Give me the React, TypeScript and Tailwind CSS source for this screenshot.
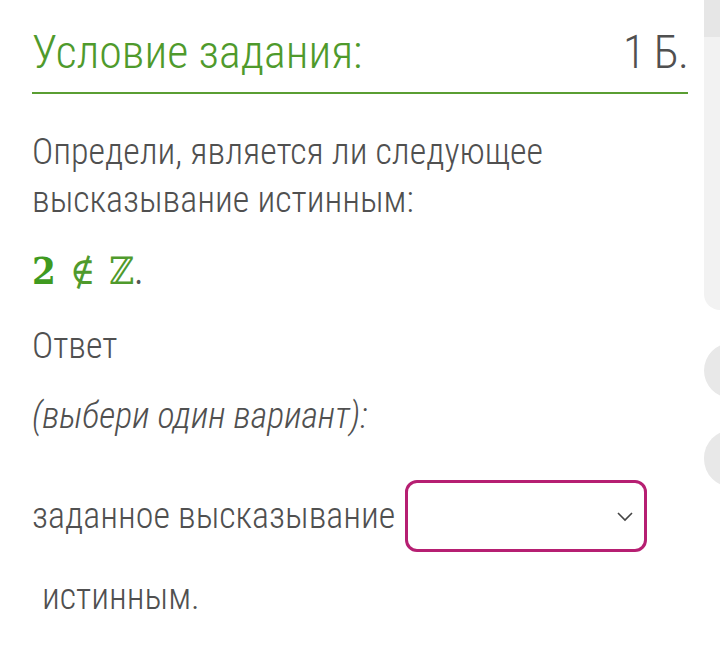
import React from "react";

export default function App() {
  const font = { fontFamily: "Roboto, 'Noto Sans', sans-serif" };
  return (
    <div className="w-[720px] h-[652px] bg-white flex overflow-hidden" style={font}>
      <div className="w-[704px] pl-[32px] pr-[16px] flex flex-col font-light font-stretch-condensed text-[#505050]">
        <div className="flex justify-between items-end h-[76px] pb-[1px]">
          <span className="text-[46px] leading-none text-[#4f9a2c]">Условие задания:</span>
          <span className="text-[46px] leading-none text-[#505050] tracking-[-1px]">1 Б.</span>
        </div>
        <div className="h-[2px] bg-[#5a9e32] mt-[16px]"></div>
        <p className="mt-[34px] text-[36px] leading-[48px]">
          Определи, является ли следующее
          <br />
          высказывание истинным:
        </p>
        <div className="mt-[28px] text-[38px] leading-none flex items-baseline" style={{ fontFamily: "'DejaVu Serif', 'Liberation Serif', serif" }}>
          <span className="font-bold text-[#3f9a1f]">2</span>
          <span className="ml-[14px] text-[#4f9a2c] font-extralight">∉</span>
          <span className="ml-[14px] text-[#4f9a2c] font-normal">ℤ</span>
          <span className="text-[#555] font-normal text-[32px]">.</span>
        </div>
        <p className="mt-[38px] text-[36px] leading-none">Ответ</p>
        <p className="mt-[34px] text-[36px] leading-none italic">(выбери один вариант):</p>
        <div className="mt-[46px] flex items-center">
          <span className="text-[36px] leading-none">заданное высказывание</span>
          <div className="ml-[10px] w-[242px] h-[72px] border-[3px] border-[#b61f72] rounded-[12px] flex items-center justify-end pr-[10px]">
            <svg width="18" height="12" viewBox="0 0 18 12" fill="none" stroke="#444" strokeWidth="1.6">
              <path d="M2 3 L9 10 L16 3" />
            </svg>
          </div>
        </div>
        <p className="mt-[27px] pl-[10px] text-[36px] leading-none">истинным.</p>
      </div>
      <div className="w-[16px] flex flex-col overflow-hidden">
        <div className="h-[37px] bg-[#e6e6e6] shrink-0"></div>
        <div className="h-[273px] bg-[#f2f2f2] rounded-bl-[26px] shrink-0"></div>
        <div className="mt-[33px] w-[56px] h-[55px] rounded-full bg-[#e8e8e8] shrink-0"></div>
        <div className="mt-[32px] w-[56px] h-[57px] rounded-full bg-[#e8e8e8] shrink-0"></div>
      </div>
    </div>
  );
}
